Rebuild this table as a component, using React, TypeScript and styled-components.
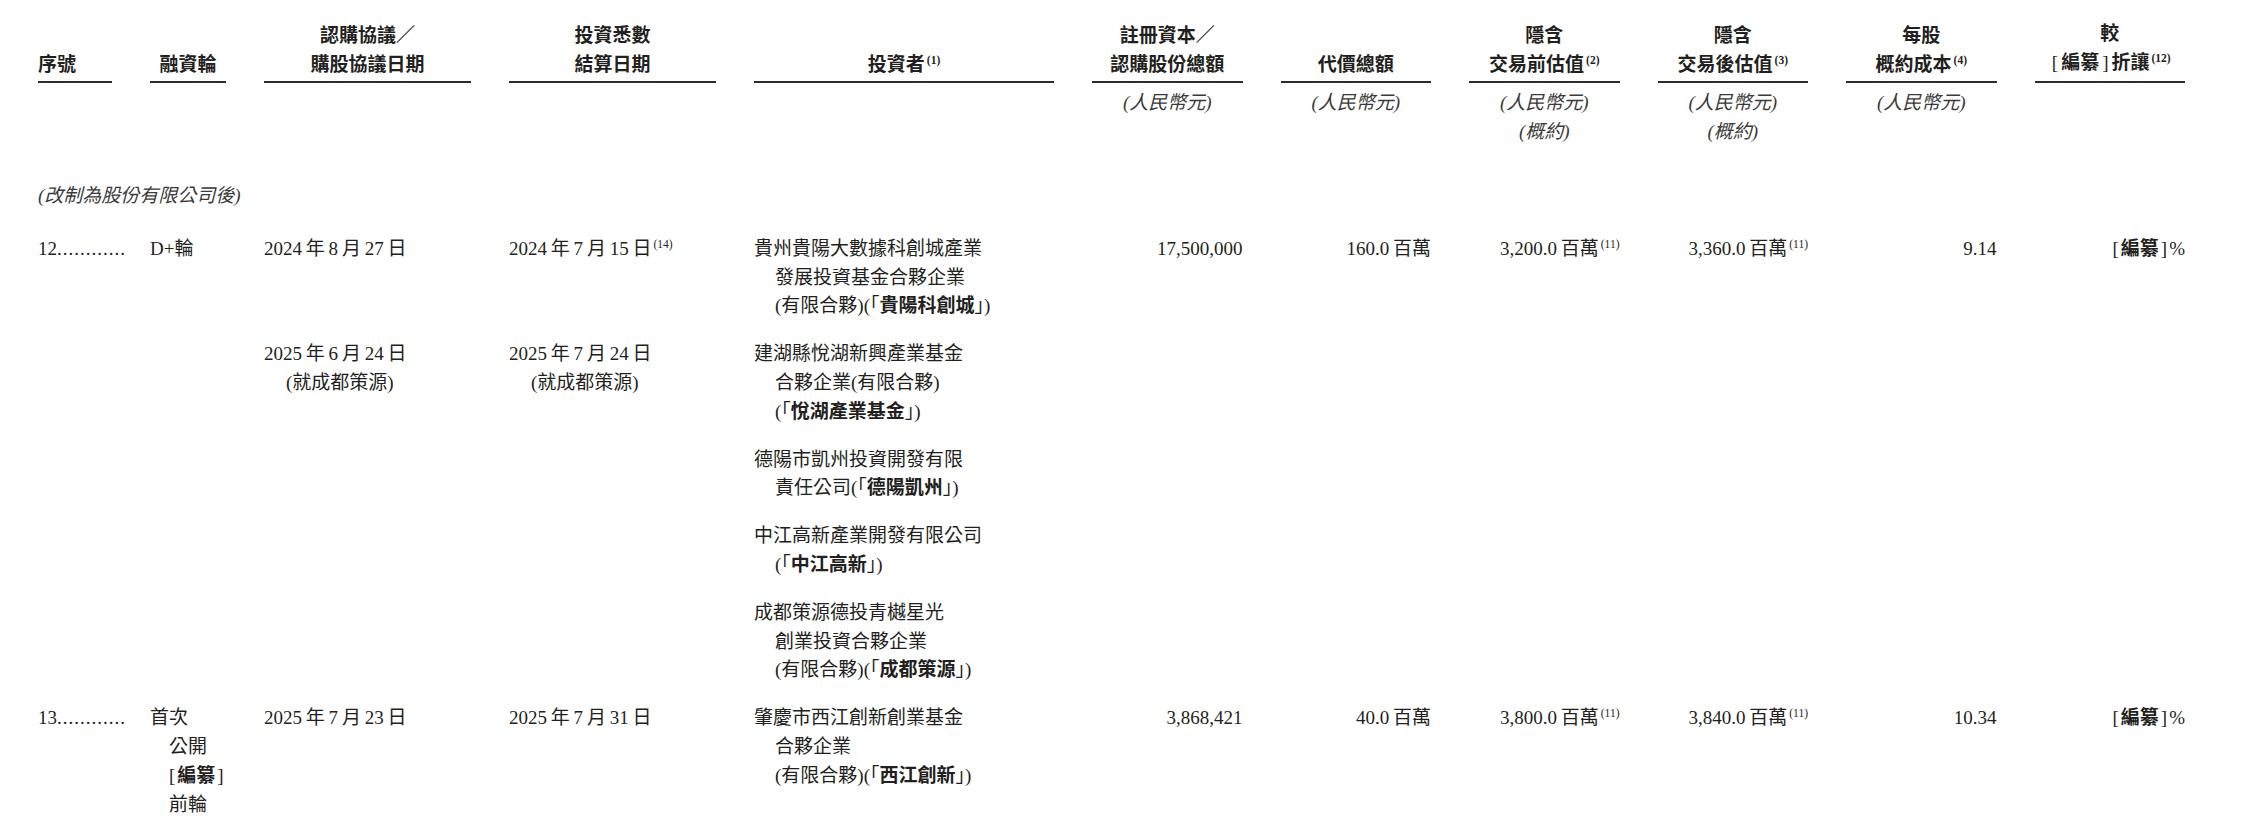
import React from 'react';
import styled, { createGlobalStyle } from 'styled-components';

const GlobalStyle = createGlobalStyle`
  html, body {
    margin: 0;
    padding: 0;
    background: #ffffff;
  }
  body {
    font-family: 'Liberation Serif', 'Noto Sans CJK TC', serif;
    color: #231f20;
    font-size: 19px;
  }
`;

const LINE = 28.8;
const T = '\u2009';

const Page = styled.div`
  padding: 17px 0 0 38px;
`;

const Table = styled.div`
  display: grid;
  grid-template-columns: 74px 76px 207px 207px 300px repeat(6, 150.5px);
  column-gap: 38px;
  align-items: start;
`;

const HeadCell = styled.div<{ $left?: boolean }>`
  align-self: stretch;
  display: flex;
  flex-direction: column;
  justify-content: flex-end;
  align-items: ${(p) => (p.$left ? 'flex-start' : 'center')};
  text-align: ${(p) => (p.$left ? 'left' : 'center')};
  font-family: 'Noto Sans CJK TC', 'Liberation Serif', sans-serif;
  font-weight: 700;
  line-height: 29px;
  padding-bottom: 4px;
  border-bottom: 2px solid #2b2b2b;
  white-space: nowrap;
`;

const Bracket = styled.span<{ $head?: boolean }>`
  font-family: 'Liberation Serif', serif;
  font-weight: 400;
  margin: 0 ${(p) => (p.$head ? 3 : 2)}px;
`;

const UnitCell = styled.div`
  padding-top: 5px;
  text-align: center;
  font-style: italic;
  line-height: 29px;
  color: #3a3a3a;
`;

const SectionLabel = styled.div`
  grid-column: 1 / -1;
  margin-top: 36px;
  font-style: italic;
  line-height: ${LINE}px;
  color: #3a3a3a;
`;

const Cell = styled.div<{ $gap?: number; $right?: boolean }>`
  padding-top: ${(p) => p.$gap ?? 0}px;
  text-align: ${(p) => (p.$right ? 'right' : 'left')};
  line-height: ${LINE}px;
  white-space: nowrap;
`;

const Line = styled.div<{ $indent?: number }>`
  padding-left: ${(p) => p.$indent ?? 0}px;
`;

const Leader = styled.span`
  letter-spacing: 1px;
`;

const Sup = styled.sup<{ $bold?: boolean }>`
  font-family: 'Liberation Serif', serif;
  font-size: 11.5px;
  font-weight: ${(p) => (p.$bold ? 700 : 400)};
  line-height: 0;
  vertical-align: 0.6em;
  margin-left: 2px;
`;

const B = styled.b`
  font-weight: 700;
`;

const Empty = styled.div``;

const Redacted = ({ head }: { head?: boolean }) => (
  <>
    <Bracket $head={head}>[</Bracket>
    <B>編纂</B>
    <Bracket $head={head}>]</Bracket>
  </>
);

const date = (y: number, m: number, d: number) => `${y}${T}年${T}${m}${T}月${T}${d}${T}日`;

const headers: { lines: React.ReactNode[]; left?: boolean }[] = [
  { lines: ['序號'], left: true },
  { lines: ['融資輪'] },
  { lines: ['認購協議／', '購股協議日期'] },
  { lines: ['投資悉數', '結算日期'] },
  { lines: [<>投資者<Sup $bold>(1)</Sup></>] },
  { lines: ['註冊資本／', '認購股份總額'] },
  { lines: ['代價總額'] },
  { lines: ['隱含', <>交易前估值<Sup $bold>(2)</Sup></>] },
  { lines: ['隱含', <>交易後估值<Sup $bold>(3)</Sup></>] },
  { lines: ['每股', <>概約成本<Sup $bold>(4)</Sup></>] },
  {
    lines: [
      '較',
      <>
        <Redacted head />
        折讓<Sup $bold>(12)</Sup>
      </>,
    ],
  },
];

const units: string[][] = [
  [],
  [],
  [],
  [],
  [],
  ['(人民幣元)'],
  ['(人民幣元)'],
  ['(人民幣元)', '(概約)'],
  ['(人民幣元)', '(概約)'],
  ['(人民幣元)'],
  [],
];

const Investor = ({ lines }: { lines: React.ReactNode[] }) => (
  <>
    {lines.map((l, i) => (
      <Line key={i} $indent={i === 0 ? 0 : 21}>
        {l}
      </Line>
    ))}
  </>
);

// a sub-row with only the investor column filled
const InvestorOnly = ({ gap, lines }: { gap: number; lines: React.ReactNode[] }) => (
  <>
    {[0, 1, 2, 3].map((i) => (
      <Empty key={i} />
    ))}
    <Cell $gap={gap}>
      <Investor lines={lines} />
    </Cell>
    {[5, 6, 7, 8, 9, 10].map((i) => (
      <Empty key={i} />
    ))}
  </>
);

const App = () => {
  const gap = 19;
  return (
    <Page>
      <GlobalStyle />
      <Table>
        {headers.map((h, i) => (
          <HeadCell key={i} $left={h.left}>
            {h.lines.map((l, j) => (
              <div key={j}>{l}</div>
            ))}
          </HeadCell>
        ))}

        {units.map((u, i) => (
          <UnitCell key={i}>
            {u.map((t) => (
              <div key={t}>{t}</div>
            ))}
          </UnitCell>
        ))}

        <SectionLabel>(改制為股份有限公司後)</SectionLabel>

        {/* 12 — first investor */}
        <Cell $gap={24}>
          12<Leader>............</Leader>
        </Cell>
        <Cell $gap={24}>D+輪</Cell>
        <Cell $gap={24}>{date(2024, 8, 27)}</Cell>
        <Cell $gap={24}>
          {date(2024, 7, 15)}
          <Sup>(14)</Sup>
        </Cell>
        <Cell $gap={24}>
          <Investor
            lines={[
              '貴州貴陽大數據科創城產業',
              '發展投資基金合夥企業',
              <>
                (有限合夥)(「<B>貴陽科創城</B>」)
              </>,
            ]}
          />
        </Cell>
        <Cell $gap={24} $right>
          17,500,000
        </Cell>
        <Cell $gap={24} $right>
          160.0{T}百萬
        </Cell>
        <Cell $gap={24} $right>
          3,200.0{T}百萬<Sup>(11)</Sup>
        </Cell>
        <Cell $gap={24} $right>
          3,360.0{T}百萬<Sup>(11)</Sup>
        </Cell>
        <Cell $gap={24} $right>
          9.14
        </Cell>
        <Cell $gap={24} $right>
          <Redacted />%
        </Cell>

        {/* 12 — second investor with its own dates */}
        <Empty />
        <Empty />
        <Cell $gap={gap}>
          <Line>{date(2025, 6, 24)}</Line>
          <Line $indent={22}>(就成都策源)</Line>
        </Cell>
        <Cell $gap={gap}>
          <Line>{date(2025, 7, 24)}</Line>
          <Line $indent={22}>(就成都策源)</Line>
        </Cell>
        <Cell $gap={gap}>
          <Investor
            lines={[
              '建湖縣悅湖新興產業基金',
              '合夥企業(有限合夥)',
              <>
                (「<B>悅湖產業基金</B>」)
              </>,
            ]}
          />
        </Cell>
        {[5, 6, 7, 8, 9, 10].map((i) => (
          <Empty key={i} />
        ))}

        <InvestorOnly
          gap={gap}
          lines={[
            '德陽市凱州投資開發有限',
            <>
              責任公司(「<B>德陽凱州</B>」)
            </>,
          ]}
        />
        <InvestorOnly
          gap={gap}
          lines={[
            '中江高新產業開發有限公司',
            <>
              (「<B>中江高新</B>」)
            </>,
          ]}
        />
        <InvestorOnly
          gap={gap}
          lines={[
            '成都策源德投青樾星光',
            '創業投資合夥企業',
            <>
              (有限合夥)(「<B>成都策源</B>」)
            </>,
          ]}
        />

        {/* 13 */}
        <Cell $gap={gap}>
          13<Leader>............</Leader>
        </Cell>
        <Cell $gap={gap}>
          <Line>首次</Line>
          <Line $indent={19}>公開</Line>
          <Line $indent={17}>
            <Redacted />
          </Line>
          <Line $indent={19}>前輪</Line>
        </Cell>
        <Cell $gap={gap}>{date(2025, 7, 23)}</Cell>
        <Cell $gap={gap}>{date(2025, 7, 31)}</Cell>
        <Cell $gap={gap}>
          <Investor
            lines={[
              '肇慶市西江創新創業基金',
              '合夥企業',
              <>
                (有限合夥)(「<B>西江創新</B>」)
              </>,
            ]}
          />
        </Cell>
        <Cell $gap={gap} $right>
          3,868,421
        </Cell>
        <Cell $gap={gap} $right>
          40.0{T}百萬
        </Cell>
        <Cell $gap={gap} $right>
          3,800.0{T}百萬<Sup>(11)</Sup>
        </Cell>
        <Cell $gap={gap} $right>
          3,840.0{T}百萬<Sup>(11)</Sup>
        </Cell>
        <Cell $gap={gap} $right>
          10.34
        </Cell>
        <Cell $gap={gap} $right>
          <Redacted />%
        </Cell>
      </Table>
    </Page>
  );
};

export default App;
